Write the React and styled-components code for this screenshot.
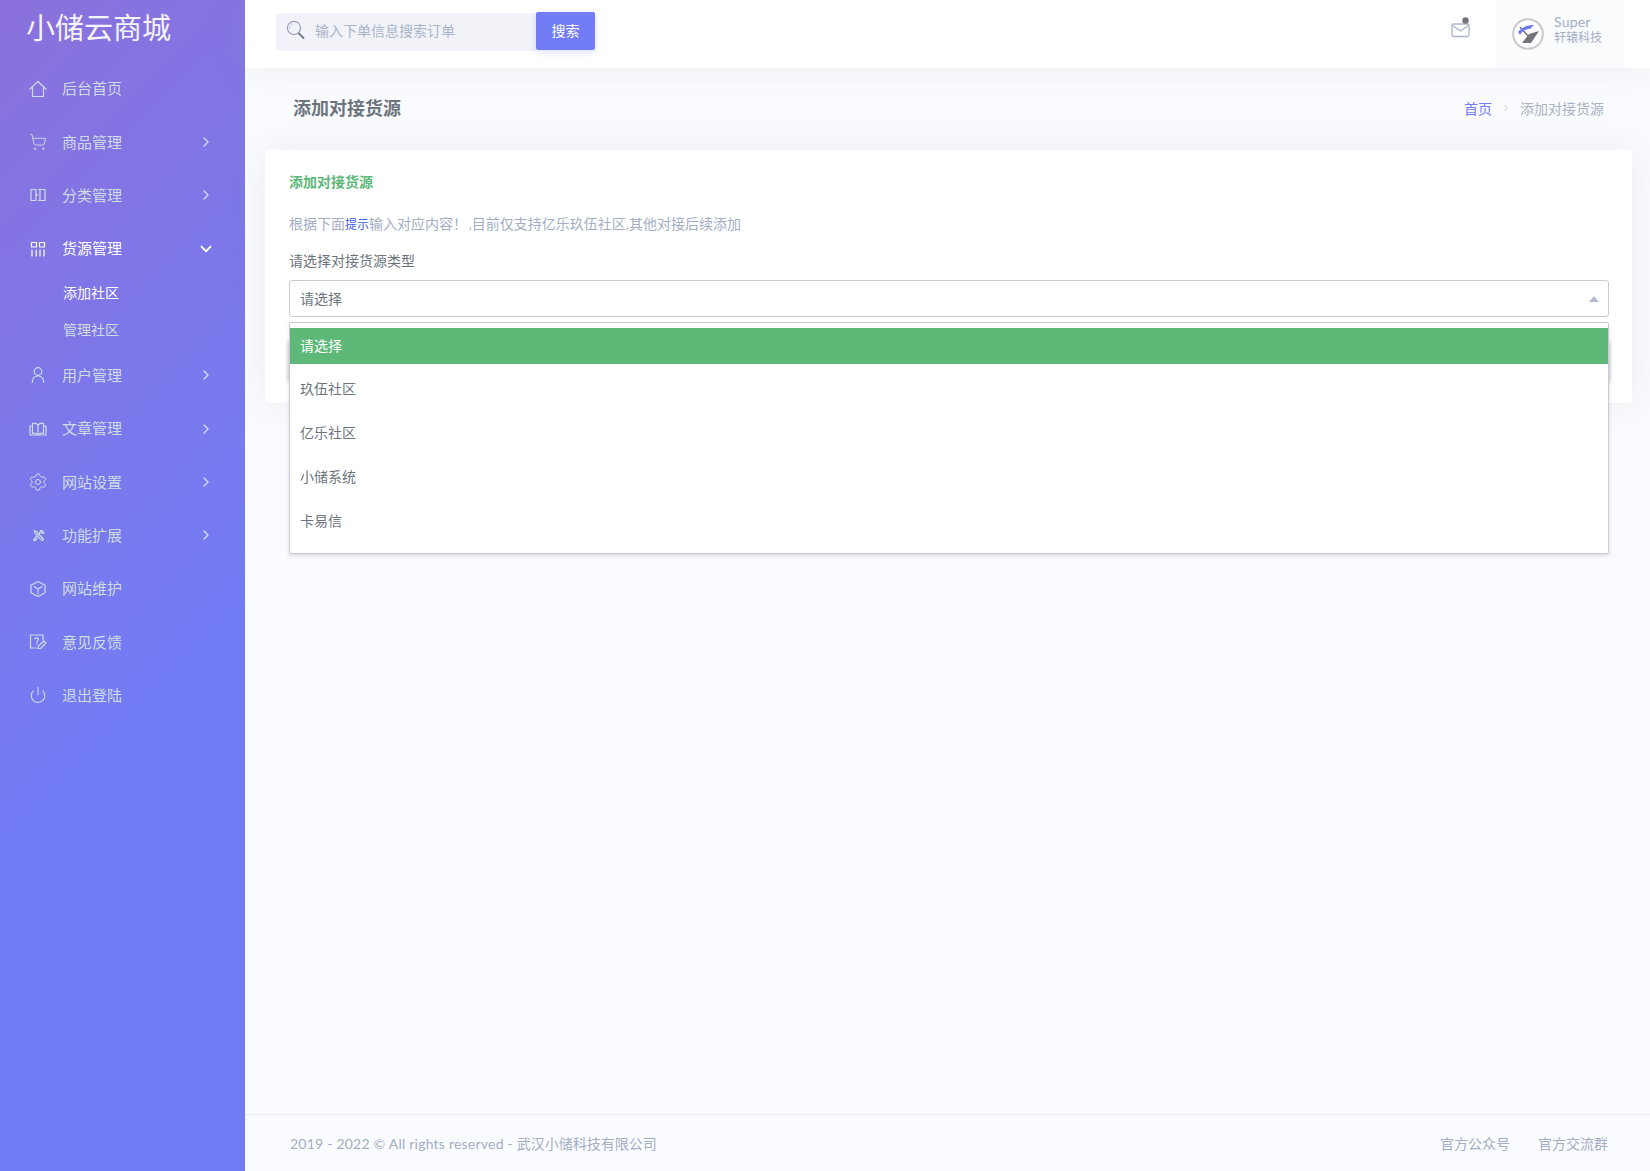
import React from 'react';
import styled, { createGlobalStyle } from 'styled-components';
import { ChevronRight, ChevronDown, ShoppingCart, Settings, Power } from 'lucide-react';

const GlobalStyle = createGlobalStyle`
  html, body {
    margin: 0;
    padding: 0;
    background: #fafbfe;
    font-family: Lato, "Noto Sans CJK SC", sans-serif;
    font-size: 14px;
    color: #6c757d;
  }
  * { box-sizing: border-box; }
`;

const Page = styled.div`
  display: grid;
  grid-template-columns: 245px 1fr;
  width: 1650px;
  height: 1171px;
  overflow: hidden;
`;

const Sidebar = styled.aside`
  background: linear-gradient(135deg, #8b71db 0%, #727cf5 60%);
  display: flex;
  flex-direction: column;
`;

const Logo = styled.div`
  height: 61px;
  padding: 9px 0 0 26px;
  font-size: 29px;
  line-height: 38px;
  color: #f4f4fb;
`;

const MenuRow = styled.div`
  display: flex;
  align-items: center;
  height: 53.35px;
  padding-left: 29px;
  font-size: 15px;
  color: ${props => (props.$active ? '#ffffff' : '#cedce4')};
`;

const IconSlot = styled.span`
  display: flex;
  align-items: center;
  justify-content: center;
  width: 18px;
  height: 18px;
  margin: 2px 15px 0 0;
  svg { display: block; flex: none; }
`;

const Arrow = styled.span`
  display: flex;
  align-items: center;
  justify-content: center;
  width: 20px;
  margin-left: auto;
  margin-right: 29px;
  margin-top: 2px;
`;

const SubRow = styled.div`
  display: flex;
  align-items: center;
  height: 36.7px;
  padding: 0 0 ${props => (props.$active ? '2px' : '0')} 63px;
  color: ${props => (props.$active ? '#ffffff' : '#cedce4')};
`;

const Main = styled.div`
  display: flex;
  flex-direction: column;
  min-width: 0;
`;

const TopBar = styled.header`
  display: flex;
  align-items: flex-start;
  height: 68px;
  background: #fff;
  box-shadow: 0 0 35px rgba(154, 161, 171, 0.15);
  padding: 12px 27px 0 31px;
`;

const SearchBox = styled.div`
  display: flex;
  align-items: center;
  width: 260px;
  height: 38px;
  margin-top: 1px;
  padding: 0 0 4px 10px;
  background: #f1f3f9;
  border-radius: 4px 0 0 4px;
  color: #a9b4c8;
`;

const SearchIcon = styled.span`
  display: flex;
  margin-right: 10px;
`;

const SearchButton = styled.button`
  width: 59px;
  height: 38px;
  padding: 0 0 2px;
  border: 0;
  border-radius: 2px;
  background: #727cf5;
  color: #fff;
  font: inherit;
  box-shadow: 0 2px 6px 0 rgba(114, 124, 245, 0.25);
`;

const MailButton = styled.div`
  display: flex;
  margin-left: auto;
  margin-right: 26px;
  margin-top: 5px;
`;

const UserBox = styled.div`
  display: flex;
  align-items: center;
  width: 126px;
  height: 68px;
  margin-top: -12px;
  padding-left: 14px;
  background: #fafbfd;
  border-left: 1px solid #f5f6fb;
  border-right: 1px solid #f5f6fb;
`;

const UserText = styled.div`
  display: flex;
  flex-direction: column;
  margin-left: 10px;
  margin-bottom: 9px;
  color: #a3aec4;
`;

const UserName = styled.span`
  font-size: 14px;
  line-height: 17px;
  letter-spacing: 0.2px;
`;

const UserOrg = styled.span`
  font-size: 12px;
  line-height: 16px;
`;

const Content = styled.main`
  flex: 1;
  padding: 0 18px 0 20px;
`;

const TitleRow = styled.div`
  display: flex;
  align-items: center;
  height: 82px;
  padding: 0 28px 4px 28px;
`;

const PageTitle = styled.h4`
  margin: 0;
  font-size: 18px;
  font-weight: 700;
  color: #6c757d;
`;

const Crumbs = styled.nav`
  display: flex;
  align-items: center;
  margin-left: auto;
  margin-top: 2px;
  color: #a9b2c2;
`;

const CrumbLink = styled.span`
  color: #727cf5;
`;

const CrumbSep = styled.span`
  display: flex;
  margin: 0 8px;
  color: #c3cad6;
`;

const Card = styled.section`
  background: #fff;
  border-radius: 4px;
  box-shadow: 0 0 35px rgba(154, 161, 171, 0.15);
  padding: 21px 23px 24px 24px;
  height: 253px;
`;

const CardTitle = styled.h5`
  margin: 0;
  font-size: 14px;
  line-height: 22px;
  font-weight: 700;
  color: #5eb878;
`;

const Hint = styled.p`
  margin: 20px 0 0;
  line-height: 22px;
  word-spacing: -2px;
  color: #a3aec4;
`;

const HintLink = styled.span`
  color: #3f5fe8;
  font-size: 12px;
`;

const FieldLabel = styled.label`
  display: block;
  margin-top: 14px;
  line-height: 22px;
  color: #6c757d;
`;

const SelectWrap = styled.div`
  position: relative;
  margin-top: 8px;
`;

const SelectBox = styled.div`
  display: flex;
  align-items: center;
  justify-content: space-between;
  height: 37px;
  padding: 0 9px 2px 10px;
  border: 1px solid #c9cbd2;
  border-radius: 3px;
  color: #6c757d;
`;

const Caret = styled.span`
  width: 0;
  height: 0;
  margin-top: 2px;
  border-left: 5.5px solid transparent;
  border-right: 5.5px solid transparent;
  border-bottom: 6px solid #b4bccd;
`;

const Dropdown = styled.ul`
  position: absolute;
  top: 42px;
  left: 0;
  right: 0;
  z-index: 5;
  margin: 0;
  padding: 5px 0 5px;
  height: 232px;
  list-style: none;
  background: #fff;
  border: 1px solid #c9cbd2;
  border-radius: 2px;
  box-shadow: 0 2px 4px rgba(0, 0, 0, 0.12);
`;

const Option = styled.li`
  display: flex;
  align-items: center;
  height: 36px;
  margin-bottom: 7.8px;
  padding: 0 10px 3px;
  background: ${props => (props.$selected ? '#5eb878' : 'transparent')};
  color: ${props => (props.$selected ? '#ffffff' : '#6c757d')};
`;

const SubmitBar = styled.div`
  height: 38px;
  margin-top: 26px;
  border-radius: 2px;
  background: #e2e5ea;
  box-shadow: 0 0 3px 2px rgba(190, 195, 205, 0.55);
`;

const Footer = styled.footer`
  display: flex;
  align-items: center;
  justify-content: space-between;
  height: 57px;
  padding: 0 42px 0 45px;
  border-top: 1px solid #e9ecf3;
  color: #a3aec4;
`;

const Copyright = styled.span`
  letter-spacing: 0.22px;
`;

const CopyrightOrg = styled.span`
  letter-spacing: 0;
`;

const FooterLinks = styled.div`
  display: flex;
  gap: 28px;
`;

const line = { fill: 'none', stroke: 'currentColor', strokeWidth: 1.2, strokeLinecap: 'round', strokeLinejoin: 'round' };

const HomeIcon = () => (
  <svg width="18" height="18" viewBox="0 0 18 18" {...line}>
    <path d="M1 9 9 1.5 17 9" />
    <path d="M3.5 7.5V16.5H14.5V7.5" />
  </svg>
);

const CartIcon = () => <ShoppingCart size={18} strokeWidth={1.2} />;

const ColumnsIcon = () => (
  <svg width="18" height="18" viewBox="0 0 18 18" {...line}>
    <path d="M2 3.5H7V14.5H2Z" />
    <path d="M11 3.5H16V14.5H11Z" />
    <path d="M7 9H9" />
    <path d="M9.5 3.5H11M9.5 14.5H11" />
  </svg>
);

const AppsIcon = () => (
  <svg width="18" height="18" viewBox="0 0 18 18" {...line}>
    <path d="M2.5 2.5H7.5V7H2.5Z" />
    <path d="M10.5 2.5H15.5V7H10.5Z" />
    <path d="M3 10V16M7.2 10V16M11 10V16M15 10V16" />
  </svg>
);

const UserIcon = () => (
  <svg width="18" height="18" viewBox="0 0 18 18" {...line}>
    <circle cx="9" cy="5.5" r="3.8" />
    <path d="M3.2 16.5C3.4 12.5 5.6 10 9 10C12.4 10 14.6 12.5 14.8 16.5" />
  </svg>
);

const BookIcon = () => (
  <svg width="18" height="18" viewBox="0 0 18 18" {...line}>
    <path d="M9 5C7.5 3.5 5 3 3.5 3.5V13.5C5 13 7.5 13.5 9 15C10.5 13.5 13 13 14.5 13.5V3.5C13 3 10.5 3.5 9 5Z" />
    <path d="M9 5V15" />
    <path d="M3.5 6H1V15H7.5M14.5 6H17V15H10.5" />
  </svg>
);

const GearIcon = () => <Settings size={20} strokeWidth={1.2} />;

const ToolsIcon = () => (
  <svg width="15" height="15" viewBox="0 0 18 18" {...line} strokeWidth="1.5">
    <path d="M4 3 7 4.5 15 13.5 14 15 12.5 14.5 5 6.5Z" />
    <path d="M14 3.5 11.5 3 10.5 6 8 8.5M6.5 10.5 3 14 4 15.5 7.5 12.5" />
    <path d="M13.5 3.5 12.5 5.5 15 6.5 15.5 5" />
  </svg>
);

const CubeIcon = () => (
  <svg width="18" height="18" viewBox="0 0 18 18" {...line}>
    <path d="M9 1.5 16 5.2V12.8L9 16.5 2 12.8V5.2Z" />
    <path d="M5 6.5 9 9 13 6.5M9 9V14" />
  </svg>
);

const FeedbackIcon = () => (
  <svg width="18" height="18" viewBox="0 0 18 18" {...line}>
    <path d="M14 7V2H1.5V15H7" />
    <path d="M6 6C6 4.5 9.5 4.2 9.5 6.3C9.5 7.6 7.7 7.8 7.7 9.3M7.7 11.2V11.5" />
    <path d="M9 15.5 9.5 13 15 8 17 10 11.5 15.5Z" />
  </svg>
);

const PowerIcon = () => <Power size={18} strokeWidth={1.4} />;

const MagnifierIcon = () => (
  <svg width="19" height="20" viewBox="0 0 19 20" fill="none" strokeLinecap="round">
    <circle cx="8" cy="8" r="6.6" stroke="#9a9fb8" strokeWidth="1.2" />
    <path d="M3.6 8.5C3.6 6 5.2 4.4 7 4" stroke="#c9cfdc" strokeWidth="1" />
    <path d="M13 13.5 17.5 18" stroke="#777588" strokeWidth="1.8" />
  </svg>
);

const MailIcon = () => (
  <svg width="20" height="21" viewBox="0 0 20 21" fill="none">
    <rect x="1" y="7" width="17" height="12.5" rx="1.5" stroke="#aab5cb" strokeWidth="1.3" />
    <path d="M1.5 8.5 9.5 14 17.5 8.5" stroke="#aab5cb" strokeWidth="1.3" />
    <circle cx="14.5" cy="3.5" r="3.2" fill="#76737d" />
  </svg>
);

const AvatarLogo = () => (
  <svg width="32" height="32" viewBox="0 0 32 32" fill="none">
    <circle cx="16" cy="16" r="14.8" fill="#fff" stroke="#c9c9cb" strokeWidth="2" />
    <path d="M8 9 18 20" stroke="#76737d" strokeWidth="1.4" />
    <path d="M10 25 17 16 27 13 19 25Z" fill="#76737d" />
    <path d="M6 14C10 9 15 7 22 7L18 11C14 11 10 13 8 17Z" fill="#727cf5" />
  </svg>
);

const menu = [
  { label: '后台首页', icon: HomeIcon },
  { label: '商品管理', icon: CartIcon, arrow: true },
  { label: '分类管理', icon: ColumnsIcon, arrow: true },
  { label: '货源管理', icon: AppsIcon, open: true, children: ['添加社区', '管理社区'] },
  { label: '用户管理', icon: UserIcon, arrow: true },
  { label: '文章管理', icon: BookIcon, arrow: true },
  { label: '网站设置', icon: GearIcon, arrow: true },
  { label: '功能扩展', icon: ToolsIcon, arrow: true },
  { label: '网站维护', icon: CubeIcon },
  { label: '意见反馈', icon: FeedbackIcon },
  { label: '退出登陆', icon: PowerIcon },
];

const options = ['请选择', '玖伍社区', '亿乐社区', '小储系统', '卡易信'];

export default function App() {
  return (
    <Page>
      <GlobalStyle />
      <Sidebar>
        <Logo>小储云商城</Logo>
        {menu.map(item => (
          <React.Fragment key={item.label}>
            <MenuRow $active={item.open}>
              <IconSlot><item.icon /></IconSlot>
              {item.label}
              {item.arrow && <Arrow><ChevronRight size={16} strokeWidth={2} /></Arrow>}
              {item.open && <Arrow><ChevronDown size={18} strokeWidth={2.4} /></Arrow>}
            </MenuRow>
            {item.children && item.children.map((child, index) => (
              <SubRow key={child} $active={index === 0}>{child}</SubRow>
            ))}
          </React.Fragment>
        ))}
      </Sidebar>
      <Main>
        <TopBar>
          <SearchBox>
            <SearchIcon><MagnifierIcon /></SearchIcon>
            输入下单信息搜索订单
          </SearchBox>
          <SearchButton>搜索</SearchButton>
          <MailButton><MailIcon /></MailButton>
          <UserBox>
            <AvatarLogo />
            <UserText>
              <UserName>Super</UserName>
              <UserOrg>轩辕科技</UserOrg>
            </UserText>
          </UserBox>
        </TopBar>
        <Content>
          <TitleRow>
            <PageTitle>添加对接货源</PageTitle>
            <Crumbs>
              <CrumbLink>首页</CrumbLink>
              <CrumbSep><ChevronRight size={12} /></CrumbSep>
              添加对接货源
            </Crumbs>
          </TitleRow>
          <Card>
            <CardTitle>添加对接货源</CardTitle>
            <Hint>根据下面<HintLink>提示</HintLink>输入对应内容！ ,目前仅支持亿乐玖伍社区,其他对接后续添加</Hint>
            <FieldLabel>请选择对接货源类型</FieldLabel>
            <SelectWrap>
              <SelectBox>
                请选择
                <Caret />
              </SelectBox>
              <Dropdown>
                {options.map((option, index) => (
                  <Option key={option} $selected={index === 0}>{option}</Option>
                ))}
              </Dropdown>
              <SubmitBar />
            </SelectWrap>
          </Card>
        </Content>
        <Footer>
          <Copyright>2019 - 2022 © All rights reserved - <CopyrightOrg>武汉小储科技有限公司</CopyrightOrg></Copyright>
          <FooterLinks>
            <span>官方公众号</span>
            <span>官方交流群</span>
          </FooterLinks>
        </Footer>
      </Main>
    </Page>
  );
}
